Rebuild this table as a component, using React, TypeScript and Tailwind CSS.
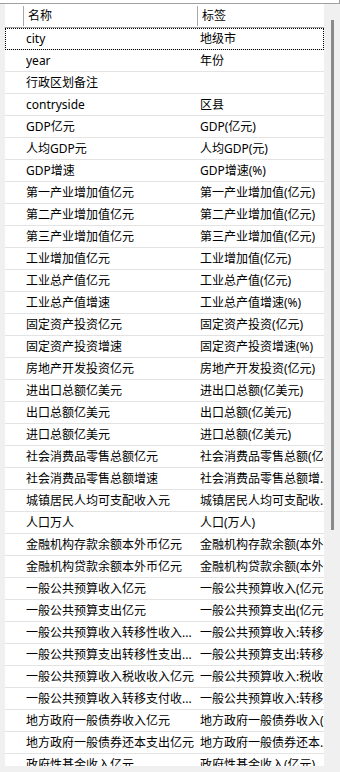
const rows: [string, string][] = [
  ["city", "地级市"],
  ["year", "年份"],
  ["行政区划备注", ""],
  ["contryside", "区县"],
  ["GDP亿元", "GDP(亿元)"],
  ["人均GDP元", "人均GDP(元)"],
  ["GDP增速", "GDP增速(%)"],
  ["第一产业增加值亿元", "第一产业增加值(亿元)"],
  ["第二产业增加值亿元", "第二产业增加值(亿元)"],
  ["第三产业增加值亿元", "第三产业增加值(亿元)"],
  ["工业增加值亿元", "工业增加值(亿元)"],
  ["工业总产值亿元", "工业总产值(亿元)"],
  ["工业总产值增速", "工业总产值增速(%)"],
  ["固定资产投资亿元", "固定资产投资(亿元)"],
  ["固定资产投资增速", "固定资产投资增速(%)"],
  ["房地产开发投资亿元", "房地产开发投资(亿元)"],
  ["进出口总额亿美元", "进出口总额(亿美元)"],
  ["出口总额亿美元", "出口总额(亿美元)"],
  ["进口总额亿美元", "进口总额(亿美元)"],
  ["社会消费品零售总额亿元", "社会消费品零售总额(亿元)"],
  ["社会消费品零售总额增速", "社会消费品零售总额增..."],
  ["城镇居民人均可支配收入元", "城镇居民人均可支配收..."],
  ["人口万人", "人口(万人)"],
  ["金融机构存款余额本外币亿元", "金融机构存款余额(本外币亿元)"],
  ["金融机构贷款余额本外币亿元", "金融机构贷款余额(本外币亿元)"],
  ["一般公共预算收入亿元", "一般公共预算收入(亿元)"],
  ["一般公共预算支出亿元", "一般公共预算支出(亿元)"],
  ["一般公共预算收入转移性收入...", "一般公共预算收入:转移性收入(亿元)"],
  ["一般公共预算支出转移性支出...", "一般公共预算支出:转移性支出(亿元)"],
  ["一般公共预算收入税收收入亿元", "一般公共预算收入:税收收入(亿元)"],
  ["一般公共预算收入转移支付收...", "一般公共预算收入:转移支付收入(亿元)"],
  ["地方政府一般债券收入亿元", "地方政府一般债券收入(亿元)"],
  ["地方政府一般债券还本支出亿元", "地方政府一般债券还本..."],
  ["政府性基金收入亿元", "政府性基金收入(亿元)"],
];

export default function App() {
  return (
    <div
      className="w-[340px] h-[772px] bg-[#f0f0f0] overflow-hidden text-[12px] text-black"
      style={{ fontFamily: '"Noto Sans", "Noto Sans CJK SC", sans-serif' }}
    >
      <div className="h-[4px] bg-white border-b border-r border-[#a0a0a0]" />

      <div className="flex h-[768px]">
        <div className="w-[5px] shrink-0" />

        {/* list panel */}
        <div className="w-[319px] h-[762px] shrink-0 bg-white overflow-hidden flex flex-col">
          <div className="h-[24px] shrink-0 flex items-center border-b border-[#a0a0a0]">
            <div className="w-[18px] shrink-0" />
            <div className="w-px h-[20px] bg-[#a8a8a8]" />
            <div className="w-[173px] shrink-0 pl-[4px] leading-[18px]">名称</div>
            <div className="w-px h-[20px] bg-[#a8a8a8]" />
            <div className="pl-[4px] leading-[18px] whitespace-nowrap">标签</div>
          </div>

          {rows.map(([name, label], i) => (
            <div
              key={i}
              className={
                i === 0
                  ? "h-[22px] shrink-0 flex items-center border-b border-[#e3e3e3] outline outline-1 outline-dotted outline-black -outline-offset-1"
                  : "h-[22px] shrink-0 flex items-center border-b border-[#e3e3e3]"
              }
            >
              <div className="w-[21px] shrink-0" />
              <div className="w-[174px] shrink-0 overflow-hidden whitespace-nowrap leading-[18px]">
                {name}
              </div>
              <div className="whitespace-nowrap leading-[18px]">{label}</div>
            </div>
          ))}
        </div>

        {/* scrollbar */}
        <div className="flex-1">
          <div className="ml-[7px] mt-[16px] w-[3px] h-[510px] bg-[#8a8a8a]" />
        </div>
      </div>
    </div>
  );
}
